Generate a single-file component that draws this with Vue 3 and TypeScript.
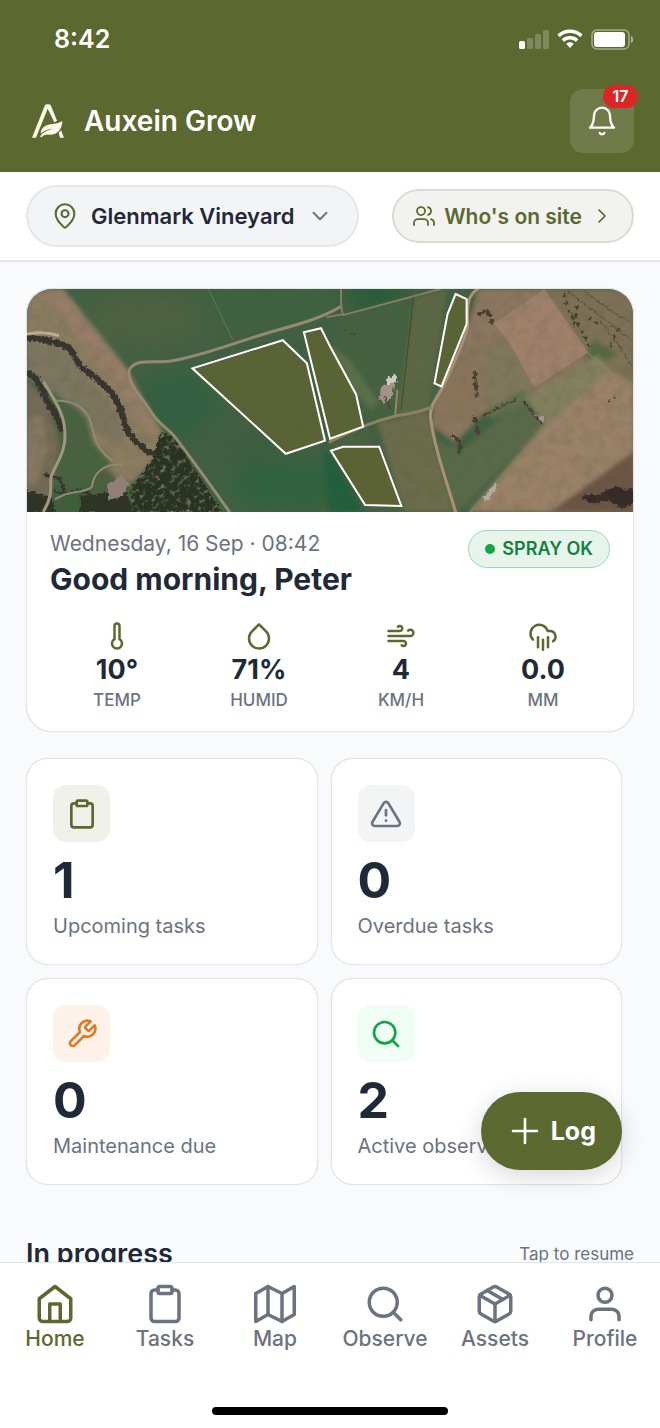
<script setup lang="ts">
import { ref } from 'vue'

interface Reading { id: string; value: string; unit: string; paths: string[] }
interface Tile { id: string; count: number; label: string; tone: string; paths: string[] }
interface Tab { id: string; label: string; paths: string[] }

const clipboard = [
  'M16 4h2a2 2 0 0 1 2 2v14a2 2 0 0 1-2 2H6a2 2 0 0 1-2-2V6a2 2 0 0 1 2-2h2',
  'M9 2h6a1 1 0 0 1 1 1v2a1 1 0 0 1-1 1H9a1 1 0 0 1-1-1V3a1 1 0 0 1 1-1z',
]
const search = ['M19 11a8 8 0 1 1-16 0 8 8 0 0 1 16 0z', 'M21 21l-4.35-4.35']

const site = ref('Glenmark Vineyard')
const sites: string[] = ['Glenmark Vineyard']
const activeTab = ref('home')

const readings: Reading[] = [
  { id: 'temp', value: '10°', unit: 'TEMP', paths: ['M14 4v10.54a4 4 0 1 1-4 0V4a2 2 0 0 1 4 0Z'] },
  { id: 'humid', value: '71%', unit: 'HUMID', paths: ['M12 2.69l5.66 5.66a8 8 0 1 1-11.31 0z'] },
  {
    id: 'wind',
    value: '4',
    unit: 'KM/H',
    paths: ['M17.7 7.7a2.5 2.5 0 1 1 1.8 4.3H2', 'M9.6 4.6A2 2 0 1 1 11 8H2', 'M12.6 19.4A2 2 0 1 0 14 16H2'],
  },
  {
    id: 'rain',
    value: '0.0',
    unit: 'MM',
    paths: ['M4 14.899A7 7 0 1 1 15.71 8h1.79a4.5 4.5 0 0 1 2.5 8.242', 'M16 13v8', 'M8 13v8', 'M12 15v8'],
  },
]

const tiles: Tile[] = [
  { id: 'upcoming', count: 1, label: 'Upcoming tasks', tone: 'olive', paths: clipboard },
  {
    id: 'overdue',
    count: 0,
    label: 'Overdue tasks',
    tone: 'slate',
    paths: ['M10.29 3.86L1.82 18a2 2 0 0 0 1.71 3h16.94a2 2 0 0 0 1.71-3L13.71 3.86a2 2 0 0 0-3.42 0z', 'M12 9v4', 'M12 17h.01'],
  },
  {
    id: 'maintenance',
    count: 0,
    label: 'Maintenance due',
    tone: 'orange',
    paths: ['M14.7 6.3a1 1 0 0 0 0 1.4l1.6 1.6a1 1 0 0 0 1.4 0l3.77-3.77a6 6 0 0 1-7.94 7.94l-6.91 6.91a2.12 2.12 0 0 1-3-3l6.91-6.91a6 6 0 0 1 7.94-7.94l-3.76 3.76z'],
  },
  { id: 'observations', count: 2, label: 'Active observations', tone: 'green', paths: search },
]

const tabs: Tab[] = [
  { id: 'home', label: 'Home', paths: ['M3 9l9-7 9 7v11a2 2 0 0 1-2 2H5a2 2 0 0 1-2-2z', 'M9 22V12h6v10'] },
  { id: 'tasks', label: 'Tasks', paths: clipboard },
  { id: 'map', label: 'Map', paths: ['M1 6v16l7-4 8 4 7-4V2l-7 4-8-4-7 4z', 'M8 2v16', 'M16 6v16'] },
  { id: 'observe', label: 'Observe', paths: search },
  {
    id: 'assets',
    label: 'Assets',
    paths: [
      'M16.5 9.4l-9-5.19',
      'M21 16V8a2 2 0 0 0-1-1.73l-7-4a2 2 0 0 0-2 0l-7 4A2 2 0 0 0 3 8v8a2 2 0 0 0 1 1.73l7 4a2 2 0 0 0 2 0l7-4A2 2 0 0 0 21 16z',
      'M3.27 6.96L12 12.01l8.73-5.05',
      'M12 22.08V12',
    ],
  },
  { id: 'profile', label: 'Profile', paths: ['M20 21v-2a4 4 0 0 0-4-4H8a4 4 0 0 0-4 4v2', 'M16 7a4 4 0 1 1-8 0 4 4 0 0 1 8 0z'] },
]

const blocks: string[] = [
  '166,79 256,51 280,74 298,151 259,164',
  '277,43 294,39 303,57 329,105 336,137 303,149',
  '428,5 439,10 439,35 414,97 407,94 420,25',
  '304,161 316,157 352,157 374,216 338,215',
]
</script>

<template>
  <div class="app">
    <header class="top">
      <div class="status">
        <span class="clock">8:42</span>
        <div class="status-icons">
          <svg class="signal" viewBox="0 0 30 19" aria-hidden="true">
            <rect x="0" y="11" width="6" height="8" rx="1.5" />
            <rect class="dim" x="8" y="8" width="6" height="11" rx="1.5" />
            <rect class="dim" x="16" y="4" width="6" height="15" rx="1.5" />
            <rect class="dim" x="24" y="0" width="6" height="19" rx="1.5" />
          </svg>
          <svg class="wifi" viewBox="0 0 26 20" aria-hidden="true">
            <path d="M13 0.6C8 0.6 3.600 2.500 0.400 5.600L2.800 8.200C5.500 5.600 9 4.100 13 4.100s7.500 1.500 10.200 4.100l2.400-2.600C22.400 2.500 18 .6 13 .6z" />
            <path d="M13 7.100c-3.200 0-6.100 1.200-8.300 3.200l2.500 2.600c1.500-1.400 3.500-2.300 5.800-2.300s4.300.9 5.800 2.300l2.500-2.600c-2.200-2-5.100-3.200-8.300-3.200z" />
            <path d="M13 13.200c-1.500 0-2.800.6-3.800 1.500L13 18.900l3.800-4.200c-1-.9-2.300-1.500-3.800-1.500z" />
          </svg>
          <svg class="battery" viewBox="0 0 43 21" aria-hidden="true">
            <rect class="shell" x="1" y="1" width="37" height="19" rx="5" />
            <rect x="3" y="3" width="31" height="15" rx="3" />
            <path class="nub" d="M40 7c3 1 3 6 0 7z" />
          </svg>
        </div>
      </div>
      <div class="brand-row">
        <div class="brand">
          <svg class="logo" viewBox="0 0 96 100" aria-hidden="true">
            <path d="M0 100 38 4Q39 0 47 0q8 0 10 4l18 45-8 5L47 13 12 100z" />
            <path d="M26 88c1-20 17-27 36-29 13-1 22-4 29-9 0 24-14 42-40 41-10-1-17 2-22 8l-5-2c7-13 22-20 40-24-18 1-31 7-38 15z" />
            <path d="M80 85l7-7 9 22H84z" />
          </svg>
          <h1>Auxein Grow</h1>
        </div>
        <button class="bell" type="button" aria-label="Notifications, 17 unread">
          <svg class="icon" viewBox="0 0 24 24" aria-hidden="true">
            <path d="M6 8a6 6 0 0 1 12 0c0 7 3 9 3 9H3s3-2 3-9" />
            <path d="M10.3 21a1.94 1.94 0 0 0 3.4 0" />
          </svg>
          <span class="badge">17</span>
        </button>
      </div>
    </header>

    <div class="site-bar">
      <label class="site-picker">
        <svg class="icon pin" viewBox="0 0 24 24" aria-hidden="true">
          <path d="M20 10c0 4.993-5.539 10.193-7.399 11.799a1 1 0 0 1-1.202 0C9.539 20.193 4 14.993 4 10a8 8 0 0 1 16 0" />
          <circle cx="12" cy="10" r="3" />
        </svg>
        <select v-model="site" aria-label="Vineyard">
          <option v-for="name in sites" :key="name">{{ name }}</option>
        </select>
        <svg class="icon chevron" viewBox="0 0 24 24" aria-hidden="true"><path d="M6 9l6 6 6-6" /></svg>
      </label>
      <button class="on-site" type="button">
        <svg class="icon" viewBox="0 0 24 24" aria-hidden="true">
          <path d="M16 21v-2a4 4 0 0 0-4-4H6a4 4 0 0 0-4 4v2" />
          <circle cx="9" cy="7" r="4" />
          <path d="M22 21v-2a4 4 0 0 0-3-3.870" />
          <path d="M16 3.130a4 4 0 0 1 0 7.750" />
        </svg>
        <span>Who's on site</span>
        <svg class="icon next" viewBox="0 0 24 24" aria-hidden="true"><path d="M9 18l6-6-6-6" /></svg>
      </button>
    </div>

    <div class="stage">
      <main>
        <section class="card overview">
          <svg class="map" viewBox="0 0 606 222" preserveAspectRatio="xMidYMid slice" role="img" aria-label="Aerial map of vineyard blocks">
            <defs>
              <filter id="soft" x="-5%" y="-5%" width="110%" height="110%">
                <feGaussianBlur stdDeviation="2" />
              </filter>
              <filter id="haze" x="-20%" y="-20%" width="140%" height="140%">
                <feGaussianBlur stdDeviation="12" />
              </filter>
              <filter id="rough" x="-10%" y="-10%" width="120%" height="120%">
                <feTurbulence type="fractalNoise" baseFrequency="0.3" numOctaves="2" seed="4" />
                <feDisplacementMap in="SourceGraphic" scale="6" xChannelSelector="R" yChannelSelector="G" />
                <feGaussianBlur stdDeviation="0.6" />
              </filter>
              <filter id="grain" x="0" y="0" width="100%" height="100%">
                <feTurbulence type="fractalNoise" baseFrequency="0.09" numOctaves="5" seed="9" />
                <feColorMatrix values="0 0 0 0 0.1  0 0 0 0 0.1  0 0 0 0 0.06  1.6 1.2 0 0 -1.2" />
              </filter>
              <filter id="canopy" x="0" y="0" width="100%" height="100%">
                <feTurbulence type="fractalNoise" baseFrequency="0.2" numOctaves="3" seed="2" />
                <feColorMatrix values="0 0 0 0 0.3  0 0 0 0 0.34  0 0 0 0 0.2  2.200 0 0 0 -1.150" result="leaf" />
                <feComposite in="leaf" in2="SourceGraphic" operator="in" />
                <feGaussianBlur stdDeviation="0.6" />
              </filter>
            </defs>

            <rect width="606" height="222" fill="#426043" />
            <g filter="url(#haze)">
              <ellipse cx="120" cy="30" rx="60" ry="25" fill="#4d6340" />
              <ellipse cx="240" cy="18" rx="70" ry="16" fill="#3a633d" />
              <ellipse cx="150" cy="115" rx="42" ry="34" fill="#33613f" />
              <ellipse cx="265" cy="196" rx="64" ry="24" fill="#2f643e" />
              <ellipse cx="225" cy="160" rx="30" ry="18" fill="#3a5e3e" />
              <ellipse cx="350" cy="6" rx="34" ry="14" fill="#245c39" />
            </g>

            <g filter="url(#soft)">
              <path d="M314 27l70-20-12 115-30 12-13-30-26-48z" fill="#45623f" />
              <path d="M387 8l33-8-6 40-13 80-32 8z" fill="#5b6744" />
              <path d="M303 55l20 16 28 42-6 8-18-18z" fill="#5c6f48" />
              <path d="M350 133l50-12 28 101h-52z" fill="#6a6c4c" />
              <path d="M304 150l34-10 40 82h-34l-40-60z" fill="#4c613f" />
              <path d="M405 150l30 10 60-50 22 24-86 88h-6z" fill="#586b49" />
              <path d="M296 160l12 8 28 54h-34z" fill="#245f3d" />

              <path d="M0 0h33l72 90 38 62-8 12-30 30-30-12-20-60-22-15-33-20z" fill="#8a7b60" />
              <path d="M16 0h22l62 78 36 66-12 2-42-60z" fill="#957d68" />
              <path d="M0 50l42 12 24 30 26 30 6 36-22-10-20-26-26-16-30-28z" fill="#7b765f" />
              <path d="M0 90l20 20 18 30-8 34-8 48H0z" fill="#746a57" />
              <path d="M0 130l16-6 6 36-10 34H0z" fill="#857760" />
              <path d="M20 102l14 12 26 14 8 26 18 20-20 18-24 8-14-12 6-30z" fill="#47643f" />
              <path d="M66 186l18-6 10 18-16 22-16-14z" fill="#4b613d" />
              <path d="M30 214l30-14 14 22H28z" fill="#3d5f38" />

              <path d="M450 0h156v222H440l76-88-20-27-41 18-27 28-23-16v-20l35-79z" fill="#8b7660" />
              <path d="M460 60l26-16 20 54-42 26-18-20z" fill="#80785c" />
              <path d="M516 0h90v96l-46-33z" fill="#7d7157" />
              <path d="M566 50l24 14-14 10-20-6z" fill="#596b45" />
              <path d="M455 122l40-22 10 8-40 22z" fill="#62704d" />
              <path d="M496 108l74-42 14 16-64 52z" fill="#83805f" />
              <path d="M580 82l26 14v66l-83 60h-78l75-88z" fill="#9a8168" />
              <path d="M434 56l20 10 2 60-28 8-20-8z" fill="#8a745c" />
            </g>
            <path d="M466 34l50-33 44 62-54 35-24-44z" fill="#9f806b" />
            <path d="M523 222l83-60v60z" fill="#6c5444" filter="url(#soft)" />
            <path d="M552 206l20-2 14-8 12 4 8-2v16l-14 4-12-8-16 4z" fill="#352b28" filter="url(#rough)" />

            <rect width="606" height="222" filter="url(#grain)" opacity="0.2" />

            <g fill="none" stroke="#38362d" stroke-linejoin="round" stroke-linecap="round" filter="url(#rough)">
              <path d="M0 48c16 2 30 4 42 10 8 6 6 12 14 20 10 8 20 14 30 26 8 10 10 20 14 34 4 12 16 18 22 24l16 6" stroke-width="6" />
              <path d="M0 83c12 4 16 14 20 26 4 10 14 18 16 30" stroke-width="7" />
              <path d="M20 185l14 4 6 16" stroke-width="3" />
              <path d="M28 200l10 6 14-6 18 6 14-4" stroke-width="2" />
            </g>
            <g fill="none" stroke="#46402f" stroke-linecap="round" filter="url(#rough)">
              <path d="M452 25l8-4 4 12M447 84l2 22M447 128l4 18" stroke-width="4" stroke-dasharray="5 5" />
              <path d="M425 146l8 6-2 12" stroke-width="3" />
              <path d="M456 126l32-16M496 112l18 22" stroke-width="2" stroke-dasharray="7 3" />
              <path d="M536 6l6 18 10 14 12 24M550 10l-4 26M562 28l6 6M590 40l-8 16" stroke-width="3" stroke-dasharray="1 7" />
              <path d="M318 40h4M325 45l4-1M580 112l8-6" stroke-width="2" stroke-dasharray="1 6" />
            </g>
            <g fill="none" stroke="#5c5540" stroke-width="1">
              <path d="M540 2c20 16 40 30 64 50M556 2c20 16 30 22 48 32M570 30c12 14 22 26 34 48" filter="url(#rough)" />
            </g>
            <g filter="url(#rough)">
              <path d="M126 171l8-30 16 9 45 72h-90v-24z" fill="#293322" />
              <path d="M0 200l26 8 4 14H0zM54 206l46-4 8 20H54z" fill="#2f3426" />
            </g>
            <path d="M126 171l8-30 16 9 45 72h-90v-24z" filter="url(#canopy)" />
            <path d="M82 194l14-8 8 8-8 12-14 4z" fill="#8f7f76" filter="url(#rough)" />

            <g fill="none" stroke-linecap="round" stroke-linejoin="round">
              <path d="M313 18c-20 12-45 18-73 26-34 10-62 22-97 28-14 2-34-4-40 9-2 14 14 28 23 43 8 12 18 16 24 25l26 35 27 38" stroke="#958a70" stroke-width="3" />
              <path d="M314 0c0 10-1 16 2 26L413 0M300 28l16-3" stroke="#83805e" stroke-width="2" />
              <path d="M450 0c-12 8-10 20-10 38-6 22-16 40-25 60-6 12-13 18-12 30 4 30 15 60 25 94" stroke="#aa9174" stroke-width="3" />
              <path d="M403 118c-10 4-20 6-33 8-24 6-44 14-67 26" stroke="#8c8263" stroke-width="3" />
              <path d="M386 8l-12 112" stroke="#3e4a33" stroke-width="1" />
              <path d="M368 125l2-24" stroke="#8f8870" stroke-width="2" />
              <path d="M516 0l44 64 22 18 24 14" stroke="#8e8261" stroke-width="1" />
              <path d="M443 222l75-86" stroke="#7f805e" stroke-width="2" />
              <path d="M182 0l24 50" stroke="#5f7551" stroke-width="1" />
              <path d="M0 45c10-2 22-2 32 1" stroke="#b9ab98" stroke-width="3" />
              <path d="M18 93c10 16 20 30 21 48 2 22-10 34-14 47 0 12 1 20-7 33" stroke="#a09780" stroke-width="3" />
              <path d="M30 111c20 0 32 8 36 26 4 18 8 24 20 34M95 175c-18-2-28 10-29 22-10 8-20 2-36 12" stroke="#8f8c70" stroke-width="2" />
            </g>
            <g filter="url(#rough)">
              <path d="M358 90l10-5 2 7-8 5z" fill="#cfc9c6" />
              <path d="M354 96l13-2-2 14-8 6-5-4z" fill="#a1928c" />
              <path d="M355 106l4 2 6 12-4-2z" fill="#4e4540" />
              <path d="M455 208l12-14 2 5-10 12z" fill="#b3aba2" />
              <path d="M506 124l10 4-1 6z" fill="#a69a94" />
            </g>
            <g class="blocks">
              <polygon v-for="points in blocks" :key="points" :points="points" />
            </g>
          </svg>

          <div class="overview-body">
            <div class="greeting">
              <div>
                <p class="date">Wednesday, 16 Sep · 08:42</p>
                <h2>Good morning, Peter</h2>
              </div>
              <span class="spray"><i></i>SPRAY OK</span>
            </div>
            <ul class="readings">
              <li v-for="r in readings" :key="r.id">
                <svg class="icon" viewBox="0 0 24 24" aria-hidden="true">
                  <path v-for="d in r.paths" :key="d" :d="d" />
                </svg>
                <strong>{{ r.value }}</strong>
                <span>{{ r.unit }}</span>
              </li>
            </ul>
          </div>
        </section>

        <section class="tiles">
          <article v-for="t in tiles" :key="t.id" class="card tile">
            <span class="tile-icon" :class="t.tone">
              <svg class="icon" viewBox="0 0 24 24" aria-hidden="true">
                <path v-for="d in t.paths" :key="d" :d="d" />
              </svg>
            </span>
            <strong>{{ t.count }}</strong>
            <span class="tile-label">{{ t.label }}</span>
          </article>
        </section>

        <section class="progress">
          <h2>In progress</h2>
          <span>Tap to resume</span>
        </section>
      </main>

      <button class="log" type="button">
        <svg class="icon" viewBox="0 0 24 24" aria-hidden="true"><path d="M4 12h16M12 4v16" /></svg>
        <span>Log</span>
      </button>
    </div>

    <nav class="tabs">
      <div class="tab-row">
        <a v-for="t in tabs" :key="t.id" :href="'#' + t.id" :class="{ active: t.id === activeTab }" @click.prevent="activeTab = t.id">
          <svg class="icon" viewBox="0 0 24 24" aria-hidden="true">
            <path v-for="d in t.paths" :key="d" :d="d" />
          </svg>
          <span>{{ t.label }}</span>
        </a>
      </div>
      <div class="home-indicator"></div>
    </nav>
  </div>
</template>

<style>
body {
  margin: 0;
  background: #f8fafc;
}
</style>

<style scoped>
.app {
  --olive: #5b682f;
  --ink: #1f2937;
  --muted: #6b7280;
  --line: #e2e5e9;
  display: flex;
  flex-direction: column;
  height: 100vh;
  overflow: hidden;
  background: #f8fafc;
  color: var(--ink);
  font-family: Inter, "Liberation Sans", sans-serif;
  font-size: 20px;
}

h1, h2, p, ul {
  margin: 0;
  padding: 0;
}

button, select {
  border: 0;
  font: inherit;
  cursor: pointer;
}

.icon {
  display: block;
  flex: none;
  fill: none;
  stroke: currentColor;
  stroke-width: 1.75;
  stroke-linecap: round;
  stroke-linejoin: round;
}

.top {
  background: var(--olive);
  color: #fff;
  padding: 0 26px 19px;
}

.status {
  display: flex;
  align-items: center;
  justify-content: space-between;
  height: 78px;
  padding: 0 0 0 28px;
  margin-bottom: 11px;
}

.clock {
  font-size: 25px;
  font-weight: 600;
}

.status-icons {
  display: flex;
  align-items: center;
  gap: 8px;
  fill: #fff;
}

.signal { width: 30px; height: 19px; }
.wifi { width: 26px; height: 20px; }
.battery { width: 43px; height: 21px; }
.dim { opacity: 0.22; }

.shell {
  fill: none;
  stroke: #fff;
  stroke-width: 1.5;
  opacity: 0.45;
}

.nub { opacity: 0.5; }

.brand-row {
  display: flex;
  align-items: center;
  justify-content: space-between;
}

.brand {
  display: flex;
  align-items: center;
  gap: 20px;
  padding-left: 6px;
}

.logo {
  width: 32px;
  height: 34px;
  fill: #faf6e8;
}

.brand h1 {
  font-size: 28px;
  font-weight: 600;
}

.bell {
  position: relative;
  display: grid;
  place-items: center;
  width: 64px;
  height: 64px;
  padding: 0;
  border-radius: 13px;
  background: rgba(255, 255, 255, 0.13);
  color: #fff;
}

.bell .icon { width: 32px; height: 32px; }

.badge {
  position: absolute;
  top: -4px;
  right: -4px;
  min-width: 19px;
  padding: 0 8px;
  border-radius: 12px;
  background: #dc2626;
  font-size: 16px;
  font-weight: 600;
  line-height: 23px;
}

.site-bar {
  display: flex;
  align-items: center;
  justify-content: space-between;
  padding: 13px 26px;
  border-bottom: 2px solid #e5e7eb;
  background: #fff;
}

.site-picker {
  display: flex;
  align-items: center;
  gap: 12px;
  height: 58px;
  padding: 0 24px 0 23px;
  border: 2px solid #e5e7eb;
  border-radius: 31px;
  background: #f3f4f6;
}

.site-picker select {
  appearance: none;
  padding: 0;
  background: transparent;
  color: var(--ink);
  font-size: 22px;
  font-weight: 600;
}

.pin { width: 28px; height: 28px; color: var(--olive); }
.chevron { width: 26px; height: 26px; color: var(--muted); }

.on-site {
  display: flex;
  align-items: center;
  gap: 8px;
  height: 54px;
  padding: 0 18px;
  border: 2px solid #dadccf;
  border-radius: 27px;
  background: #f2f3ee;
  color: var(--olive);
  font-size: 21px;
  font-weight: 600;
}

.on-site .icon { width: 24px; height: 24px; }

.stage {
  position: relative;
  flex: 1;
  min-height: 0;
}

main {
  box-sizing: border-box;
  height: 100%;
  overflow-y: auto;
  scrollbar-width: none;
  padding: 26px 26px 0;
}

.card {
  border: 1px solid var(--line);
  background: #fff;
  box-shadow: 0 0 1px rgba(31, 41, 55, 0.18);
}

.overview {
  border-radius: 26px;
  overflow: hidden;
}

.map {
  display: block;
  width: 100%;
  height: 223px;
}

.blocks {
  fill: rgba(96, 100, 50, 0.78);
  stroke: #fff;
  stroke-width: 2;
  stroke-linejoin: miter;
}

.overview-body { padding: 18px 23px 20px; }

.greeting {
  display: flex;
  align-items: flex-start;
  justify-content: space-between;
}

.date {
  color: var(--muted);
  font-size: 21px;
  line-height: 28px;
}

.greeting h2 {
  font-size: 30px;
  font-weight: 700;
  line-height: 42px;
}

.spray {
  display: flex;
  align-items: center;
  gap: 7px;
  padding: 0 16px;
  border: 1px solid #9bd8b2;
  border-radius: 19px;
  background: #e7f4eb;
  color: #15803d;
  font-size: 18px;
  font-weight: 600;
  line-height: 36px;
}

.spray i {
  width: 10px;
  height: 10px;
  border-radius: 50%;
  background: #16a34a;
}

.readings {
  display: grid;
  grid-template-columns: repeat(4, 1fr);
  gap: 8px;
  padding-top: 21px;
  list-style: none;
}

.readings li {
  display: flex;
  flex-direction: column;
  align-items: center;
}

.readings .icon {
  width: 30px;
  height: 30px;
  color: var(--olive);
}

.readings strong {
  font-size: 27px;
  font-weight: 700;
  line-height: 38px;
}

.readings span {
  color: var(--muted);
  font-size: 17px;
  font-weight: 500;
  line-height: 22px;
}

.tiles {
  display: grid;
  grid-template-columns: 1fr 1fr;
  gap: 13px;
  padding: 26px 12px 0 0;
}

.tile {
  display: flex;
  flex-direction: column;
  align-items: flex-start;
  padding: 26px 26px 22px;
  border-radius: 22px;
}

.tile-icon {
  display: grid;
  place-items: center;
  width: 57px;
  height: 57px;
  border-radius: 13px;
}

.tile-icon .icon { width: 32px; height: 32px; }
.tile-icon .icon, .readings .icon { stroke-width: 2; }
.olive { background: #eff1ea; color: var(--olive); }
.slate { background: #f3f4f6; color: var(--muted); }
.orange { background: #fdf2e9; color: #e07b24; }
.green { background: #effdf4; color: #16a34a; }

.tile strong {
  padding-top: 8px;
  font-size: 50px;
  font-weight: 700;
  line-height: 60px;
}

.tile-label {
  color: var(--muted);
  font-size: 20px;
  line-height: 32px;
}

.progress {
  display: flex;
  align-items: center;
  justify-content: space-between;
  padding: 52px 0 26px;
}

.progress h2 {
  font-size: 27px;
  font-weight: 600;
  line-height: 34px;
}

.progress span {
  color: var(--muted);
  font-size: 17px;
}

.log {
  position: absolute;
  right: 38px;
  bottom: 92px;
  display: flex;
  align-items: center;
  gap: 8px;
  height: 78px;
  padding: 0 26px;
  border-radius: 39px;
  background: var(--olive);
  box-shadow: 0 6px 26px rgba(0, 0, 0, 0.16);
  color: #fff;
  font-size: 25px;
  font-weight: 700;
}

.log .icon { width: 36px; height: 36px; }

.tabs {
  border-top: 1px solid var(--line);
  background: #fff;
}

.tab-row {
  display: grid;
  grid-template-columns: repeat(6, 1fr);
  padding-top: 20px;
}

.tab-row a {
  display: flex;
  flex-direction: column;
  align-items: center;
  color: var(--muted);
  font-size: 21px;
  font-weight: 500;
  line-height: 27px;
  text-decoration: none;
}

.tab-row a.active { color: var(--olive); }

.tab-row .icon {
  width: 42px;
  height: 42px;
  stroke-width: 2;
}

.home-indicator {
  width: 236px;
  height: 8px;
  margin: 55px auto 13px;
  border-radius: 4px;
  background: #000;
}
</style>
